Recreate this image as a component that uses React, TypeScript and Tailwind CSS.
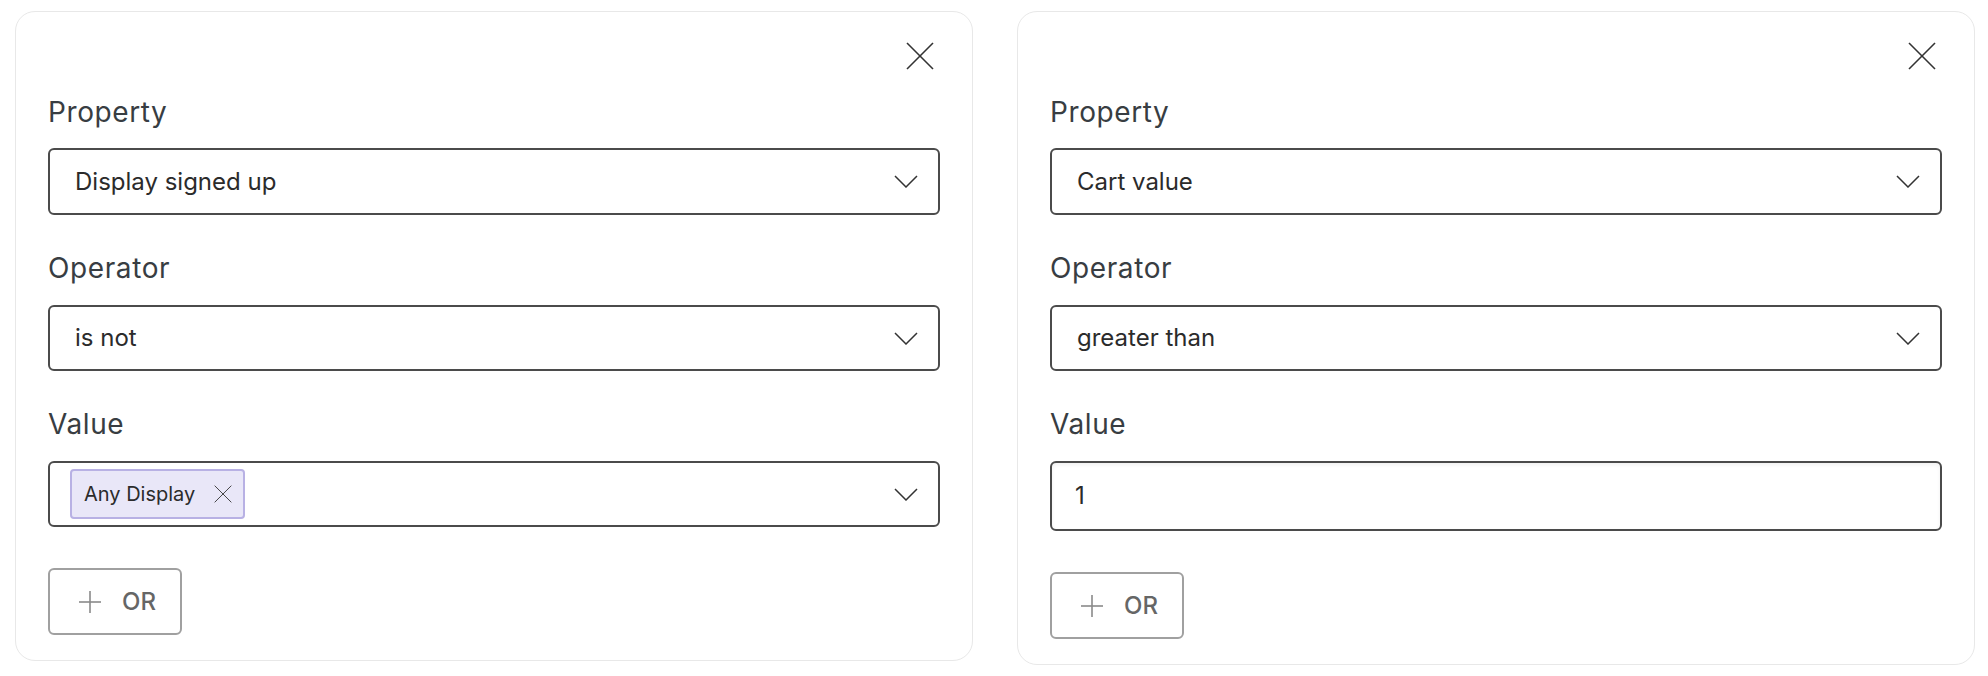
import React from "react";

const CloseIcon = ({ size = 28, stroke = 1.6, color = "#333" }: { size?: number; stroke?: number; color?: string }) => (
  <svg width={size} height={size} viewBox="0 0 28 28" fill="none">
    <line x1="1" y1="1" x2="27" y2="27" stroke={color} strokeWidth={stroke} />
    <line x1="27" y1="1" x2="1" y2="27" stroke={color} strokeWidth={stroke} />
  </svg>
);

const Chevron = () => (
  <svg width="24" height="13" viewBox="0 0 24 13" fill="none">
    <polyline points="1,1 12,12 23,1" stroke="#333" strokeWidth="1.5" fill="none" />
  </svg>
);

const Plus = () => (
  <svg width="22" height="22" viewBox="0 0 22 22" fill="none">
    <line x1="11" y1="0" x2="11" y2="22" stroke="#8a8a8a" strokeWidth="1.6" />
    <line x1="0" y1="11" x2="22" y2="11" stroke="#8a8a8a" strokeWidth="1.6" />
  </svg>
);

const Label = ({ children, className = "" }: { children: React.ReactNode; className?: string }) => (
  <div className={`text-[28px] leading-[36px] text-[#383d42] tracking-[0.6px] ${className}`}>{children}</div>
);

const Select = ({ children, className = "" }: { children: React.ReactNode; className?: string }) => (
  <div
    className={`flex h-[66px] items-center justify-between rounded-[6px] border-2 border-[#4b4b4b] bg-white pr-[20px] ${className}`}
  >
    <div className="flex min-w-0 items-center">{children}</div>
    <Chevron />
  </div>
);

const OrButton = () => (
  <button className="mt-[41px] flex h-[67px] w-[134px] items-center rounded-[6px] border-2 border-[#a0a0a0] bg-white pl-[29px] pr-[23px]">
    <Plus />
    <span className="ml-[21px] text-[24px] font-medium leading-none text-[#666666]">OR</span>
  </button>
);

const Card = ({ children }: { children: React.ReactNode }) => (
  <div className="flex flex-1 flex-col rounded-[20px] border border-[#e8e8e8] bg-white px-[32px] pb-[25px] pt-[30px]">
    <div className="flex h-[28px] justify-end pr-[6px]">
      <CloseIcon />
    </div>
    {children}
  </div>
);

export default function App() {
  return (
    <div
      className="flex w-[1988px] items-start gap-[44px] bg-white pl-[15px] pr-[13px] pt-[11px]"
      style={{ fontFamily: "Inter, 'Noto Sans', sans-serif" }}
    >
      <Card>
        <Label className="mt-[24px]">Property</Label>
        <Select className="mt-[18px] h-[67px]">
          <span className="pl-[25px] text-[24px] text-[#2b2b2b]">Display signed up</span>
        </Select>
        <Label className="mt-[35px]">Operator</Label>
        <Select className="mt-[19px]">
          <span className="pl-[25px] text-[24px] text-[#2b2b2b]">is not</span>
        </Select>
        <Label className="mt-[35px]">Value</Label>
        <Select className="mt-[19px]">
          <div className="ml-[20px] flex h-[50px] items-center rounded-[4px] border-2 border-[#b8b1e4] bg-[#e9e7f8] pl-[12px] pr-[11px]">
            <span className="text-[20px] leading-none text-[#2b2b2b]">Any Display</span>
            <span className="ml-[19px] flex">
              <CloseIcon size={18} stroke={1.4} color="#333" />
            </span>
          </div>
        </Select>
        <OrButton />
      </Card>
      <Card>
        <Label className="mt-[24px]">Property</Label>
        <Select className="mt-[18px] h-[67px]">
          <span className="pl-[25px] text-[24px] text-[#2b2b2b]">Cart value</span>
        </Select>
        <Label className="mt-[35px]">Operator</Label>
        <Select className="mt-[19px]">
          <span className="pl-[25px] text-[24px] text-[#2b2b2b]">greater than</span>
        </Select>
        <Label className="mt-[35px]">Value</Label>
        <div className="mt-[19px] flex h-[70px] items-center rounded-[6px] border-2 border-[#4b4b4b] bg-white pl-[23px] shadow-[inset_0_2px_4px_rgba(0,0,0,0.06)]">
          <span className="text-[24px] text-[#2b2b2b]">1</span>
        </div>
        <OrButton />
      </Card>
    </div>
  );
}
